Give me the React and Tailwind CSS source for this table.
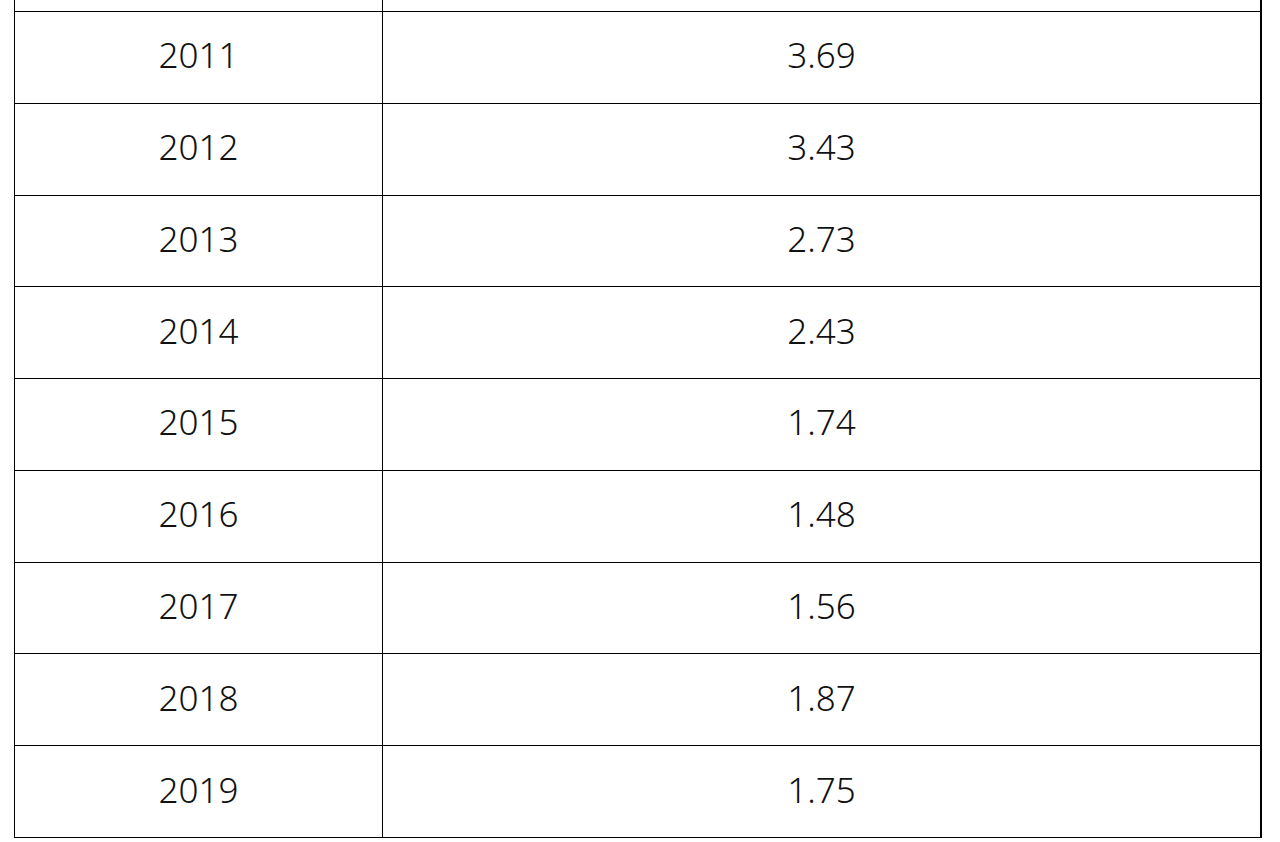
import React from "react";

const rows = [
  ["2011", "3.69"],
  ["2012", "3.43"],
  ["2013", "2.73"],
  ["2014", "2.43"],
  ["2015", "1.74"],
  ["2016", "1.48"],
  ["2017", "1.56"],
  ["2018", "1.87"],
  ["2019", "1.75"],
];

export default function App() {
  return (
    <div
      className="w-[1280px] h-[842px] bg-white overflow-hidden"
      style={{ fontFamily: '"Noto Sans", sans-serif' }}
    >
      <div className="ml-[14px] w-[1248px] border-l border-r-2 border-black border-b">
        <div className="grid grid-cols-[368px_1fr] h-[11px]">
          <div className="border-r border-black" />
          <div />
        </div>
        {rows.map(([y, v]) => (
          <div
            key={y}
            className="grid grid-cols-[368px_1fr] h-[91.78px] border-t border-black text-[35px] font-light text-[#111] leading-none"
          >
            <div className="border-r border-black flex items-center justify-center pb-[5px]">
              {y}
            </div>
            <div className="flex items-center justify-center pb-[5px]">{v}</div>
          </div>
        ))}
      </div>
    </div>
  );
}
